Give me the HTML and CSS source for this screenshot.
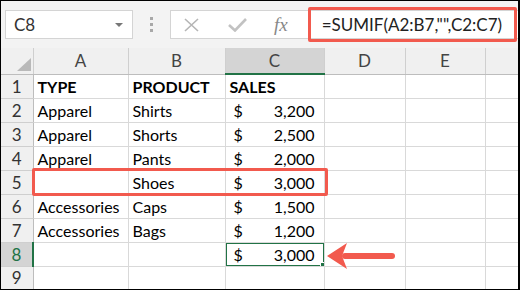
FILE: index.html
```html
<!DOCTYPE html>
<html lang="en">
<head>
    <meta charset="UTF-8">
    <title>SUMIF blank cells</title>
    <link rel="stylesheet" href="styles.css">
</head>
<body>

<div class="window">
    <div class="toolbar">
        <div class="name-box">
            <span>C8</span>
            <span class="caret"></span>
        </div>
        <div class="grip"><i></i><i></i><i></i></div>
        <div class="formula-bar">
            <span class="fb-icon cancel">
                <svg width="17" height="14" viewBox="0 0 17 14"><path d="M2 1 L15 13 M15 1 L2 13" stroke="#b5b5b5" stroke-width="1.6" fill="none"/></svg>
            </span>
            <span class="fb-icon enter">
                <svg width="19" height="14" viewBox="0 0 19 14"><path d="M1 7 L7 12.5 L18 1" stroke="#c2c2c2" stroke-width="2.6" fill="none"/></svg>
            </span>
            <span class="fb-icon fx">fx</span>
            <div class="formula">=SUMIF(A2:B7,"",C2:C7)</div>
        </div>
    </div>

    <div class="sheet">
        <table class="grid">
            <colgroup>
                <col class="c-head">
                <col class="c-a">
                <col class="c-b">
                <col class="c-c">
                <col class="c-d">
                <col class="c-e">
                <col>
            </colgroup>
            <tr class="col-heads">
                <th class="corner"><span class="select-all"></span></th>
                <th>A</th>
                <th>B</th>
                <th class="current">C</th>
                <th>D</th>
                <th>E</th>
                <th></th>
            </tr>
            <tr>
                <th class="row-num">1</th>
                <td class="bold">TYPE</td>
                <td class="bold">PRODUCT</td>
                <td class="bold">SALES</td>
                <td></td><td></td><td></td>
            </tr>
            <tr>
                <th class="row-num">2</th>
                <td>Apparel</td>
                <td>Shirts</td>
                <td class="money"><span>$</span><span>3,200</span></td>
                <td></td><td></td><td></td>
            </tr>
            <tr>
                <th class="row-num">3</th>
                <td>Apparel</td>
                <td>Shorts</td>
                <td class="money"><span>$</span><span>2,500</span></td>
                <td></td><td></td><td></td>
            </tr>
            <tr>
                <th class="row-num">4</th>
                <td>Apparel</td>
                <td>Pants</td>
                <td class="money"><span>$</span><span>2,000</span></td>
                <td></td><td></td><td></td>
            </tr>
            <tr>
                <th class="row-num">5</th>
                <td></td>
                <td>Shoes</td>
                <td class="money"><span>$</span><span>3,000</span></td>
                <td></td><td></td><td></td>
            </tr>
            <tr>
                <th class="row-num">6</th>
                <td>Accessories</td>
                <td>Caps</td>
                <td class="money"><span>$</span><span>1,500</span></td>
                <td></td><td></td><td></td>
            </tr>
            <tr>
                <th class="row-num">7</th>
                <td>Accessories</td>
                <td>Bags</td>
                <td class="money"><span>$</span><span>1,200</span></td>
                <td></td><td></td><td></td>
            </tr>
            <tr>
                <th class="row-num current">8</th>
                <td></td>
                <td></td>
                <td class="money active"><span>$</span><span>3,000</span></td>
                <td></td><td></td><td></td>
            </tr>
            <tr class="last">
                <th class="row-num">9</th>
                <td></td><td></td><td></td><td></td><td></td><td></td>
            </tr>
        </table>

        <div class="mark-row"></div>

        <svg class="arrow" width="72" height="28" viewBox="0 0 72 28">
            <line x1="20" y1="15" x2="67" y2="15" stroke="#f25a4e" stroke-width="6" stroke-linecap="round"/>
            <path d="M2 15 L22 2 L17 15 L22 28 Z" fill="#f25a4e"/>
        </svg>
    </div>
</div>

</body>
</html>
```

FILE: styles.css
```css
body {
    margin: 0;
    padding: 0;
    font-family: 'Lato', 'Liberation Sans', sans-serif;
    background-color: #fff;
}

.window {
    width: 520px;
    height: 290px;
    box-sizing: border-box;
    border: 1px solid #000;
    border-right-width: 2px;
    overflow: hidden;
    background-color: #fff;
}

/* toolbar / formula bar */

.toolbar {
    display: flex;
    align-items: center;
    height: 47px;
    padding-left: 4px;
    background-color: #f3f3f3;
}

.name-box {
    width: 128px;
    height: 29px;
    box-sizing: border-box;
    border: 1px solid #d4d4d4;
    background-color: #fff;
    display: flex;
    align-items: center;
    justify-content: space-between;
    padding: 0 9px 0 8px;
    font-size: 17px;
    color: #333;
}

.caret {
    width: 0;
    height: 0;
    border-left: 4px solid transparent;
    border-right: 4px solid transparent;
    border-top: 4px solid #777;
}

.grip {
    width: 37px;
    display: flex;
    flex-direction: column;
    align-items: center;
    gap: 3px;
}

.grip i {
    display: block;
    width: 3px;
    height: 3px;
    background-color: #a8a8a8;
}

.formula-bar {
    flex: 1;
    height: 29px;
    box-sizing: border-box;
    border: 1px solid #d4d4d4;
    border-right: none;
    background-color: #fff;
    display: flex;
    align-items: center;
}

.fb-icon {
    display: flex;
    align-items: center;
}

.cancel {
    margin-left: 12px;
}

.enter {
    margin-left: 28px;
}

.fx {
    margin-left: 27px;
    font-family: 'Liberation Serif', serif;
    font-style: italic;
    font-size: 19px;
    color: #888;
}

.formula {
    margin-left: 20px;
    margin-right: 1px;
    flex: 1;
    height: 35px;
    box-sizing: border-box;
    border: 3px solid #f25a4e;
    border-radius: 2px;
    display: flex;
    align-items: center;
    padding-left: 11px;
    font-size: 17px;
    color: #222;
    white-space: nowrap;
}

/* sheet */

.sheet {
    position: relative;
}

.grid {
    border-collapse: collapse;
    table-layout: fixed;
    width: 520px;
    font-size: 16px;
    line-height: 19px;
}

.c-head { width: 32px; }
.c-a { width: 95px; }
.c-b { width: 97px; }
.c-c { width: 99px; }
.c-d { width: 81px; }
.c-e { width: 80px; }

.grid tr {
    height: 24px;
}

.grid td,
.grid th {
    padding: 0 4px 2px;
    border: 1px solid #d9d9d9;
    white-space: nowrap;
    overflow: hidden;
    vertical-align: bottom;
    color: #000;
}

.grid tr.col-heads {
    height: 26px;
}

.grid tr:first-child th {
    border-top: none;
}

.col-heads th {
    padding: 0;
    background-color: #f0f0f0;
    border-color: #cfcfcf;
    border-bottom-color: #bdbdbd;
    font-weight: normal;
    font-size: 17px;
    color: #444;
    text-align: center;
    vertical-align: middle;
}

.col-heads th.current {
    background-color: #d4d4d4;
    border-bottom: 2px solid #217346;
}

.corner {
    position: relative;
    border-left: none !important;
}

.select-all {
    position: absolute;
    right: 2px;
    bottom: 3px;
    width: 0;
    height: 0;
    border-left: 14px solid transparent;
    border-bottom: 13px solid #b9b9b9;
}

.row-num {
    padding: 0 !important;
    background-color: #f0f0f0;
    border-color: #cfcfcf !important;
    border-left: none !important;
    border-right-color: #bdbdbd !important;
    font-weight: normal;
    font-size: 17px;
    color: #333 !important;
    text-align: center;
    vertical-align: middle !important;
}

.row-num.current {
    background-color: #d4d4d4;
    color: #217346 !important;
    border-right: 2px solid #217346 !important;
}

.grid tr.last {
    height: 23px;
}

.grid .last td,
.grid .last th {
    border-bottom: none;
}

.bold {
    font-weight: bold;
}

.money {
    padding: 0 9px 2px 8px !important;
}

.money span:first-child {
    float: left;
}

.money span:last-child {
    float: right;
}

.active {
    position: relative;
}

.active::after {
    content: "";
    position: absolute;
    left: -1px;
    top: -1px;
    right: -1px;
    bottom: -1px;
    border: 2px solid #217346;
}

.active::before {
    content: "";
    position: absolute;
    right: -3px;
    bottom: -3px;
    width: 5px;
    height: 5px;
    background-color: #217346;
    border: 1px solid #fff;
    z-index: 1;
}

/* annotations */

.mark-row {
    position: absolute;
    left: 31px;
    top: 120px;
    width: 296px;
    height: 28px;
    box-sizing: border-box;
    border: 3px solid #f25a4e;
    border-radius: 2px;
}

.arrow {
    position: absolute;
    left: 324px;
    top: 193px;
}
```
